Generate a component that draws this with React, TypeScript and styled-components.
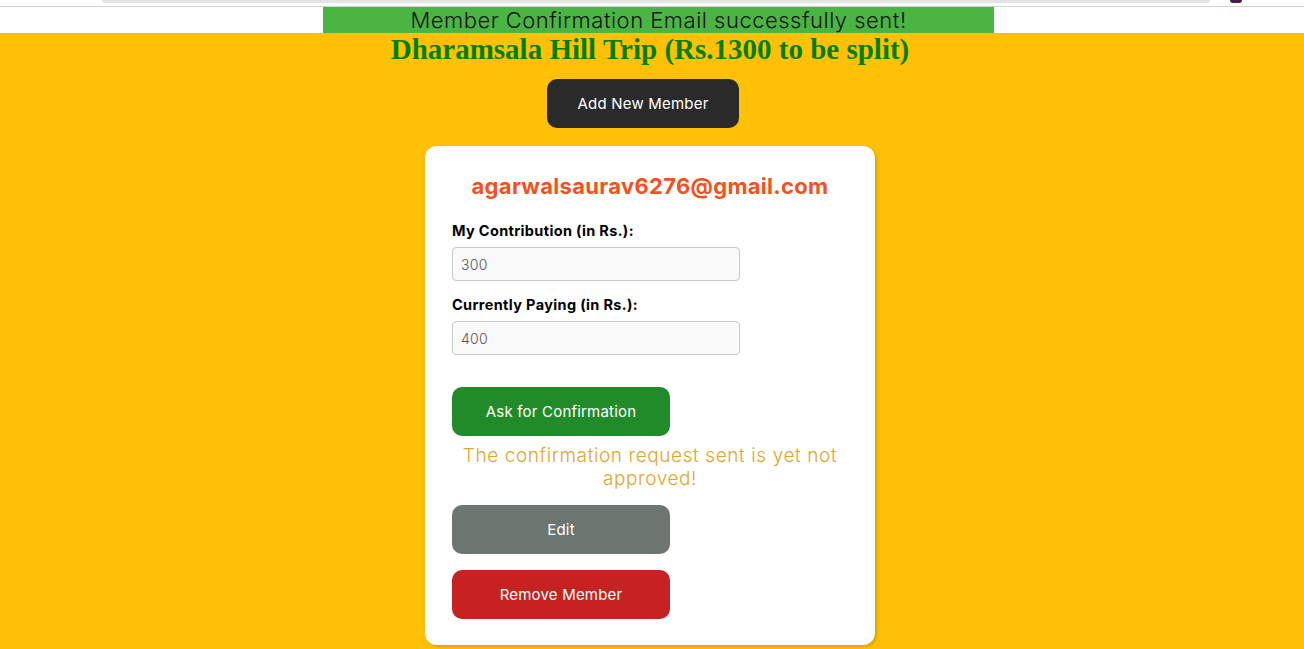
import React from "react";
import styled, { createGlobalStyle } from "styled-components";

const Global = createGlobalStyle`
  html, body { margin: 0; padding: 0; background: #fec107; }
  body { font-family: "Inter", "Noto Sans", sans-serif; }
  #root { min-height: 649px; }
`;

const Page = styled.div`
  min-height: 649px;
  background: #fec107;
  display: flex;
  flex-direction: column;
  align-items: center;
  padding-right: 4px;
`;

const TopBar = styled.div`
  align-self: stretch;
  margin-right: -4px;
  background: #fff;
  height: 7px;
  position: relative;
  display: flex;
  justify-content: center;
`;

const Chrome = styled.div`
  width: 1108px;
  height: 3px;
  margin-left: 8px;
  background: #e4e4e4;
  border-radius: 0 0 6px 6px;
`;

const Line = styled.div`
  position: absolute;
  left: 0;
  right: 0;
  bottom: 0;
  height: 1px;
  background: #d3d3d3;
`;

const Dot = styled.div`
  position: absolute;
  left: 1230px;
  top: 0;
  width: 12px;
  height: 3px;
  border-radius: 0 0 4px 4px;
  background: #4a1a4a;
`;

const BannerRow = styled.div`
  align-self: stretch;
  margin-right: -4px;
  background: #fff;
  height: 26px;
  display: flex;
  padding-left: 323px;
`;

const Banner = styled.div`
  width: 671px;
  background: #4bb543;
  color: #111;
  font-size: 22px;
  font-weight: 300;
  letter-spacing: 0.5px;
  line-height: 26px;
  text-align: center;
`;

const Title = styled.h1`
  margin: 0;
  font-family: "Liberation Serif", serif;
  font-weight: bold;
  font-size: 29px;
  line-height: 32px;
  color: #008000;
`;

const Button = styled.button<{ $bg: string }>`
  border: none;
  background: ${(p) => p.$bg};
  color: #fff;
  font-family: "Inter", "Noto Sans", sans-serif;
  font-size: 15px;
  font-weight: 400;
  letter-spacing: 0.2px;
  border-radius: 10px;
  height: 49px;
  cursor: pointer;
`;

const AddButton = styled(Button)`
  width: 192px;
  margin-top: 14px;
  margin-right: 14px;
`;

const Card = styled.div`
  margin-top: 18px;
  width: 450px;
  box-sizing: border-box;
  background: #fff;
  border-radius: 12px;
  box-shadow: 2px 2px 3px rgba(160, 110, 0, 0.35);
  padding: 26px 27px 26px;
  display: flex;
  flex-direction: column;
`;

const Email = styled.h2`
  margin: 0;
  text-align: center;
  color: #f4511e;
  font-size: 22px;
  font-weight: 700;
  letter-spacing: 0.3px;
  line-height: 28px;
`;

const Label = styled.label<{ $top: number }>`
  display: block;
  margin-top: ${(p) => p.$top}px;
  font-size: 14.5px;
  font-weight: 700;
  letter-spacing: 0.35px;
  color: #000;
  line-height: 18px;
`;

const Input = styled.input`
  margin-top: 7px;
  width: 288px;
  height: 34px;
  box-sizing: border-box;
  border: 1px solid #c8c8c8;
  border-radius: 4px;
  background: #f9f9f9;
  padding: 0 8px;
  font-family: "Inter", "Noto Sans", sans-serif;
  font-size: 14px;
  font-weight: 300;
  letter-spacing: 0.3px;
  color: #555;
`;

const ActionButton = styled(Button)`
  width: 218px;
`;

const Message = styled.p`
  margin: 8px 0 15px;
  text-align: center;
  color: #e0a52a;
  font-size: 19px;
  font-weight: 300;
  letter-spacing: 0.6px;
  line-height: 23px;
`;

export default function App() {
  return (
    <>
      <Global />
      <Page>
        <TopBar>
          <Chrome />
          <Dot />
          <Line />
        </TopBar>
        <BannerRow>
          <Banner>Member Confirmation Email successfully sent!</Banner>
        </BannerRow>
        <Title>Dharamsala Hill Trip (Rs.1300 to be split)</Title>
        <AddButton $bg="#2a2a2a">Add New Member</AddButton>
        <Card>
          <Email>agarwalsaurav6276@gmail.com</Email>
          <Label $top={22}>My Contribution (in Rs.):</Label>
          <Input readOnly value="300" />
          <Label $top={15}>Currently Paying (in Rs.):</Label>
          <Input readOnly value="400" />
          <ActionButton $bg="#228b29" style={{ marginTop: 32 }}>Ask for Confirmation</ActionButton>
          <Message>The confirmation request sent is yet not approved!</Message>
          <ActionButton $bg="#6c7570">Edit</ActionButton>
          <ActionButton $bg="#c62222" style={{ marginTop: 16 }}>Remove Member</ActionButton>
        </Card>
      </Page>
    </>
  );
}
